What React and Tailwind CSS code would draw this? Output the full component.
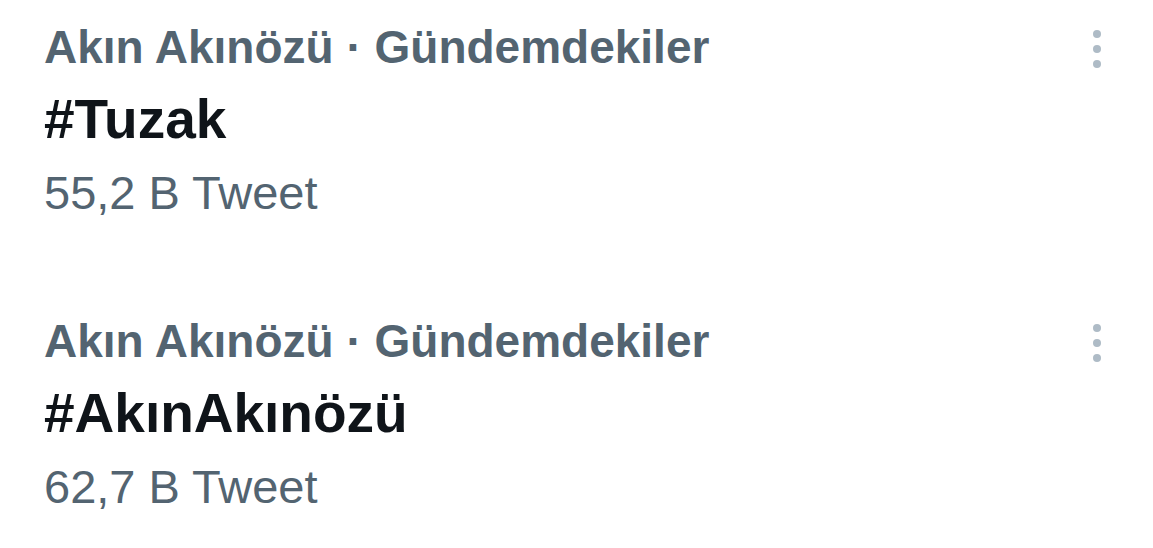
const trends = [
  { context: "Akın Akınözü · Gündemdekiler", tag: "#Tuzak", count: "55,2 B Tweet" },
  { context: "Akın Akınözü · Gündemdekiler", tag: "#AkınAkınözü", count: "62,7 B Tweet" },
];

function MoreDots() {
  return (
    <div className="flex flex-col items-center gap-[7px] pt-[14px]">
      <span className="block h-2 w-2 rounded-full bg-[#aebbc6]" />
      <span className="block h-2 w-2 rounded-full bg-[#aebbc6]" />
      <span className="block h-2 w-2 rounded-full bg-[#aebbc6]" />
    </div>
  );
}

export default function App() {
  return (
    <div className="h-[548px] w-[1153px] overflow-hidden bg-white font-['Liberation_Sans',Arial,sans-serif]">
      {trends.map((t, i) => (
        <div key={i} className="flex justify-between pl-[44px] pr-[52px] pt-4 pb-[68px]">
          <div className="flex flex-col">
            <span className="text-[46px] leading-[62px] font-bold text-[#536471]">{t.context}</span>
            <span className="text-[55px] leading-[82px] font-bold text-[#0f1419]">{t.tag}</span>
            <span className="text-[47px] leading-[66px] text-[#536471]">{t.count}</span>
          </div>
          <MoreDots />
        </div>
      ))}
    </div>
  );
}
